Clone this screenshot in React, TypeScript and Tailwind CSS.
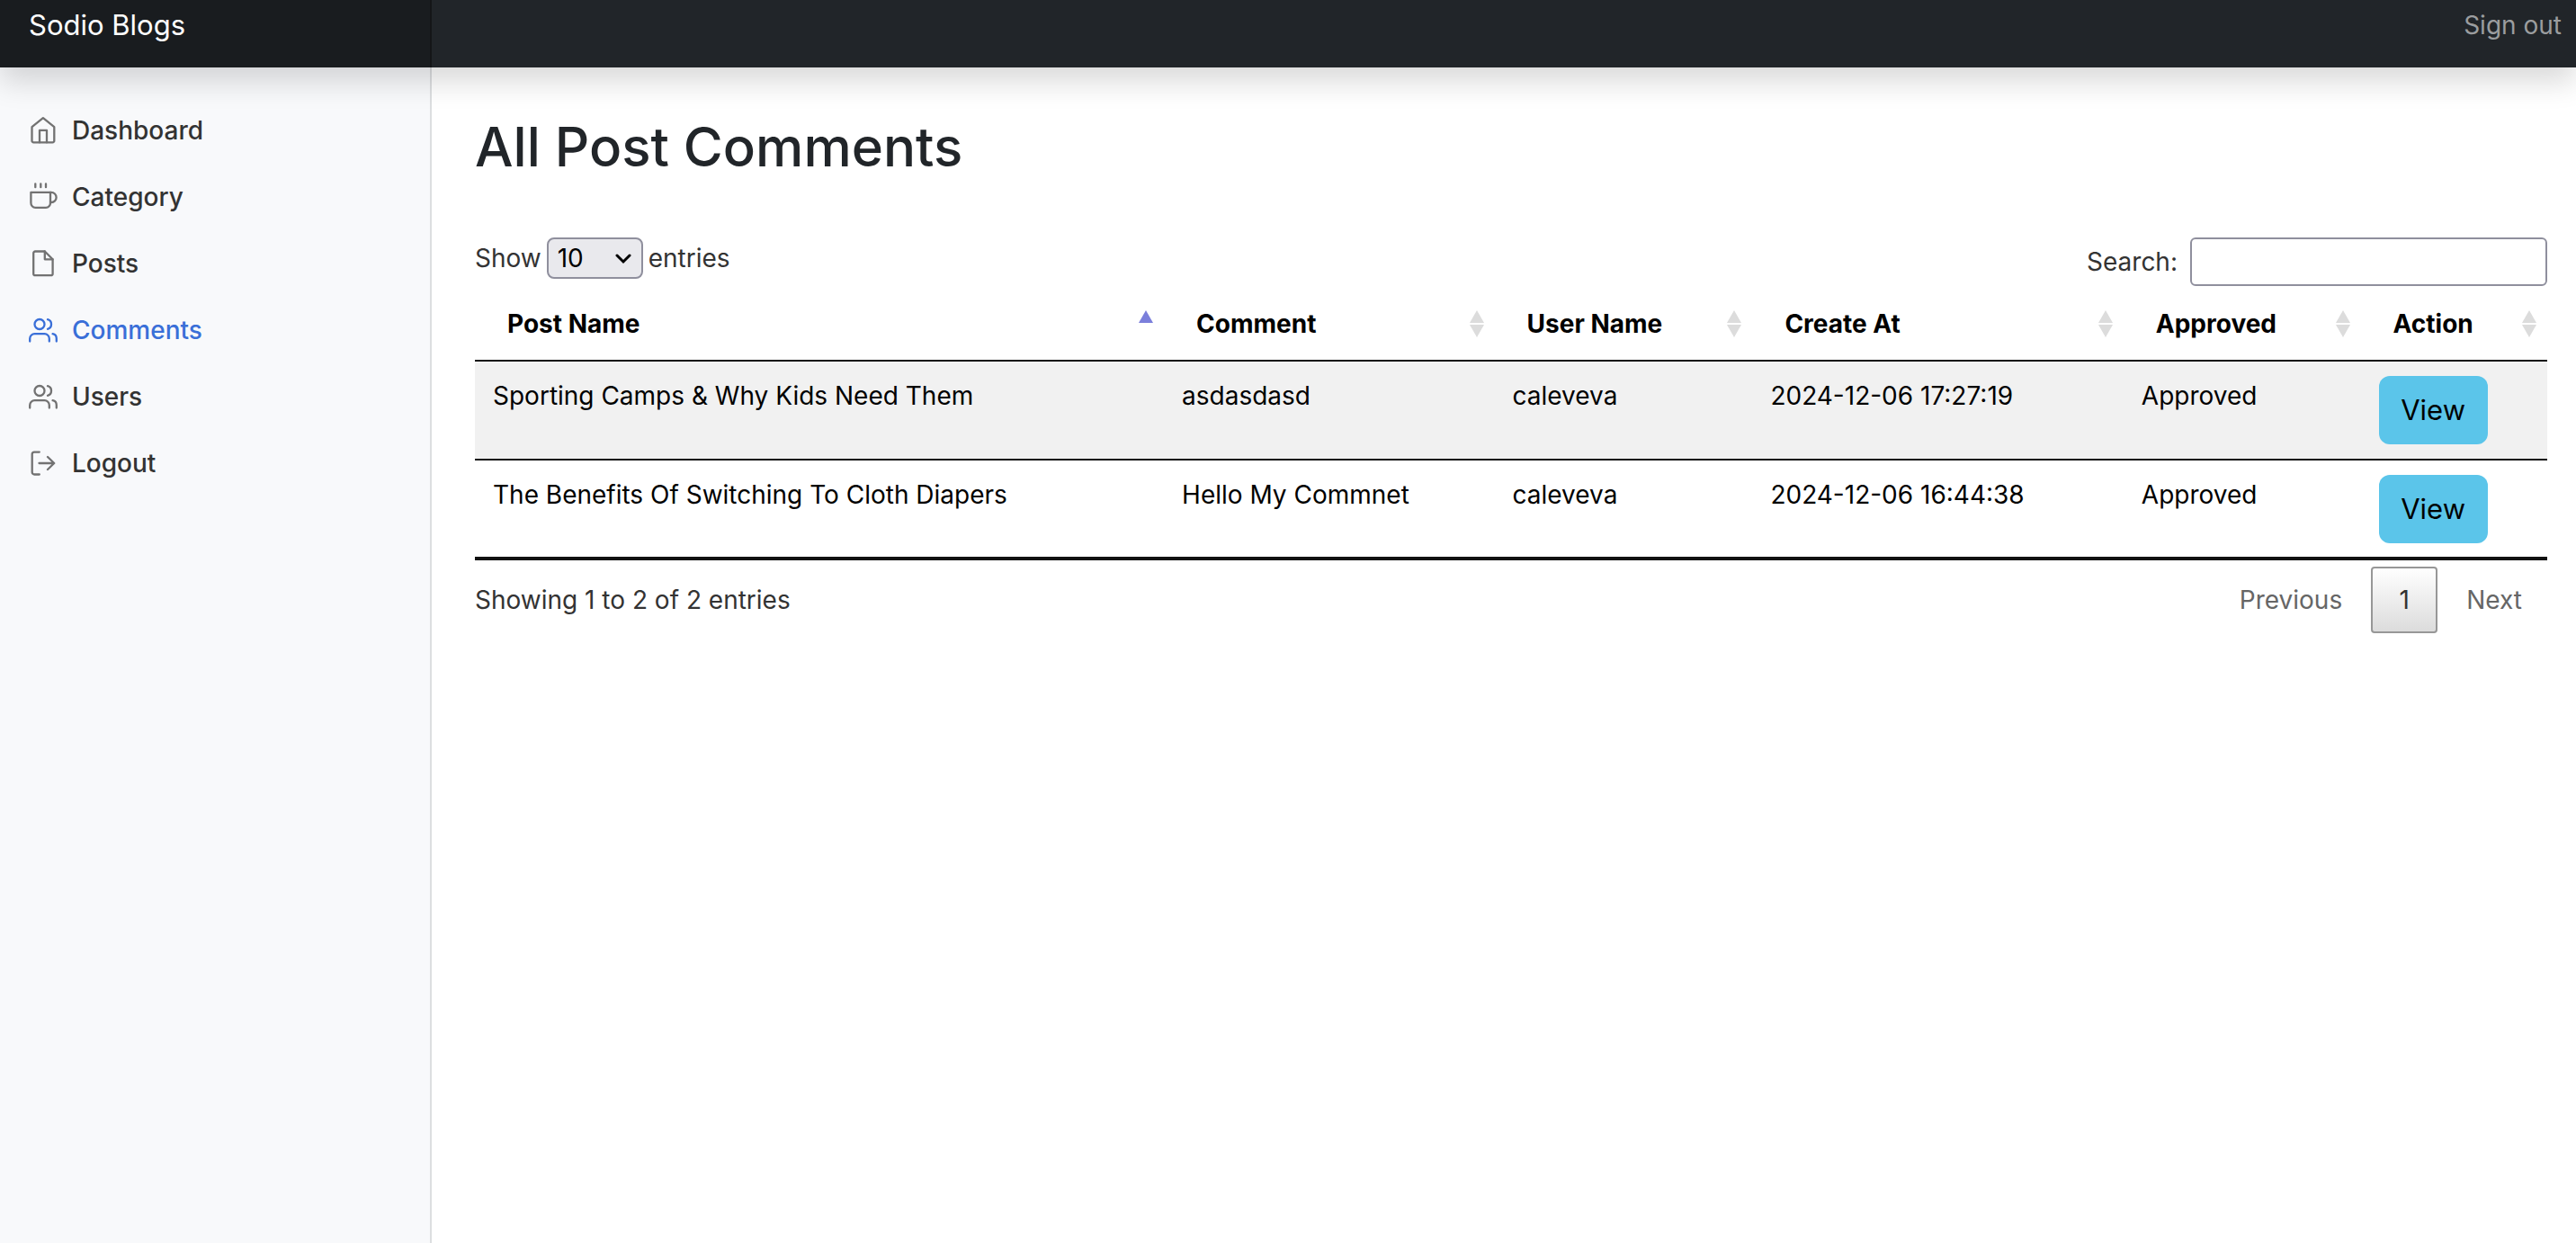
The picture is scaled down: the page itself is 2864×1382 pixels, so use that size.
import React from "react";

type IconName = "home" | "cup" | "file" | "people" | "exit";

const PATHS: Record<IconName, React.ReactNode> = {
  home: (
    <>
      <path d="M3.500 12.200 L15.900 2.200 L28.300 12.200 V27.500 A1.800 1.800 0 0 1 26.500 29.300 H5.300 A1.800 1.800 0 0 1 3.500 27.500 Z" />
      <path d="M12 29.300 V15.800 H20 V29.300" />
    </>
  ),
  cup: (
    <>
      <path d="M2.400 10.800 H24 V22.600 A5 5 0 0 1 19 27.800 H7.400 A5 5 0 0 1 2.400 22.600 Z" />
      <path d="M24 10.800 H25 A5.500 5.500 0 0 1 25 22 H24" />
      <path d="M7.300 1.300 V5.200 M13.300 1.300 V5.200 M19 1.300 V5.200" />
    </>
  ),
  file: (
    <>
      <path d="M7.200 2.500 H17.800 L26.600 11.300 V27.200 A2 2 0 0 1 24.600 29.200 H7.200 A2 2 0 0 1 5.200 27.200 V4.500 A2 2 0 0 1 7.200 2.500 Z" />
      <path d="M17.800 2.500 V11.300 H26.600" />
    </>
  ),
  people: (
    <>
      <circle cx="12" cy="9.500" r="5.500" />
      <path d="M1.200 28.500 V25.500 A5.300 5.300 0 0 1 6.500 20.200 H17.500 A5.300 5.300 0 0 1 22.800 25.500 V28.500" />
      <path d="M21 4.200 A5.500 5.500 0 0 1 21 14.800" />
      <path d="M26.600 20.200 A5.300 5.300 0 0 1 30.800 25.500 V28.500" />
    </>
  ),
  exit: (
    <>
      <path d="M11.800 3.600 H6.200 A2.500 2.500 0 0 0 3.700 6.100 V26 A2.500 2.500 0 0 0 6.200 28.500 H11.800" />
      <path d="M11.500 16 H28 M21 9 L28.200 16 L21 23" />
    </>
  ),
};

function Icon({ name }: { name: IconName }) {
  return (
    <svg aria-hidden="true" viewBox="0 0 32 32" className="size-8 shrink-0" fill="none" stroke="currentColor" strokeWidth="2.300" strokeLinecap="round" strokeLinejoin="round">
      {PATHS[name]}
    </svg>
  );
}

const NAV: { label: string; icon: IconName; active?: boolean }[] = [
  { label: "Dashboard", icon: "home" },
  { label: "Category", icon: "cup" },
  { label: "Posts", icon: "file" },
  { label: "Comments", icon: "people", active: true },
  { label: "Users", icon: "people" },
  { label: "Logout", icon: "exit" },
];

const COLUMNS = [
  { label: "Post Name", width: "w-[33.25%]", sorted: true },
  { label: "Comment", width: "w-[15.95%]" },
  { label: "User Name", width: "w-[12.45%]" },
  { label: "Create At", width: "w-[17.9%]" },
  { label: "Approved", width: "w-[11.45%]" },
  { label: "Action", width: "w-[9%]" },
];

const ROWS = [
  ["Sporting Camps & Why Kids Need Them", "asdasdasd", "caleveva", "2024-12-06 17:27:19", "Approved"],
  ["The Benefits Of Switching To Cloth Diapers", "Hello My Commnet", "caleveva", "2024-12-06 16:44:38", "Approved"],
];

function SortIcon({ sorted }: { sorted?: boolean }) {
  return (
    <svg aria-hidden="true" viewBox="0 0 18 32" className="h-8 w-[18px] shrink-0">
      <path d="M9 1 L17 15 H1 Z" className={sorted ? "fill-[#7b7fdb]" : "fill-[#dcdcdc]"} />
      {!sorted && <path d="M9 31 L17 17 H1 Z" className="fill-[#dcdcdc]" />}
    </svg>
  );
}

export default function App() {
  return (
    <div className="flex min-h-screen flex-col bg-white font-['Inter','Liberation_Sans',sans-serif] text-[28px] leading-[42px] text-[#333333]">
      <header className="relative z-10 flex h-[75px] items-start justify-between bg-[#212529] shadow-[0_16px_32px_rgba(0,0,0,0.15)]">
        <a href="#" className="h-full w-[480px] border-r-2 border-[#141618] bg-[#191c1f] px-8 pt-1 text-[31px] leading-[48px] text-white">
          Sodio Blogs
        </a>
        <a href="#" className="px-4 pt-[7px] text-[#9b9d9f]">
          Sign out
        </a>
      </header>
      <div className="flex flex-1">
        <nav className="w-[480px] shrink-0 border-r-2 border-[#dcdee0] bg-[#f8f9fb] pt-[33px]">
          <ul>
            {NAV.map((item) => (
              <li key={item.label}>
                <a href="#" aria-current={item.active ? "page" : undefined} className={`flex h-[74px] items-center gap-4 px-8 font-medium ${item.active ? "text-[#3a6fd8]" : "text-[#333333]"}`}>
                  <span className={item.active ? "text-[#3a6fd8]" : "text-[#727272]"}>
                    <Icon name={item.icon} />
                  </span>
                  {item.label}
                </a>
              </li>
            ))}
          </ul>
        </nav>
        <main className="min-w-0 flex-1 pt-[50px] pr-8 pl-12">
          <h1 className="text-[60px] leading-[76px] font-medium text-[#212529]">All Post Comments</h1>
          <div className="mt-[63px] flex items-start justify-between">
            <label className="flex items-center gap-1.5">
              Show
              <span className="relative">
                <select className="block h-[46px] w-[107px] appearance-none rounded-lg border-2 border-[#8f8f9d] bg-[#e9e9ed] pl-2.5 leading-[38px] text-black" defaultValue="10">
                  <option>10</option>
                  <option>25</option>
                  <option>50</option>
                  <option>100</option>
                </select>
                <svg aria-hidden="true" viewBox="0 0 18 12" className="pointer-events-none absolute top-[18px] right-[13px] h-3 w-[18px]" fill="none" stroke="#000" strokeWidth="3">
                  <path d="M2 2 L9 9 L16 2" strokeLinecap="round" />
                </svg>
              </span>
              entries
            </label>
            <label className="flex items-center gap-3.5">
              Search:
              <input type="search" className="h-[54px] w-[397px] rounded-md border-2 border-[#8f8f9d] bg-white px-2" />
            </label>
          </div>
          <table className="mt-1 w-full table-fixed border-collapse text-left text-black">
            <thead>
              <tr className="h-[79px] border-b-2 border-[#111111]">
                {COLUMNS.map((c) => (
                  <th key={c.label} className={`${c.width} pr-[11px] pb-0.5 pl-9 font-bold`} aria-sort={c.sorted ? "ascending" : undefined}>
                    <div className="flex items-center justify-between whitespace-nowrap">
                      {c.label}
                      <SortIcon sorted={c.sorted} />
                    </div>
                  </th>
                ))}
              </tr>
            </thead>
            <tbody>
              {ROWS.map((row) => (
                <tr key={row[0]} className="h-[110px] border-b-2 border-[#111111] align-top last:border-b-4 odd:bg-[#f1f1f1]">
                  {row.map((cell, i) => (
                    <td key={i} className="pt-[17px] pl-5 whitespace-nowrap">
                      {cell}
                    </td>
                  ))}
                  <td className="pt-4 pl-5">
                    <button type="button" className="block h-[76px] w-[121px] rounded-xl bg-[#5bc5ea] text-[31px]">
                      View
                    </button>
                  </td>
                </tr>
              ))}
            </tbody>
          </table>
          <div className="flex items-start justify-between">
            <p className="pt-[23px]">Showing 1 to 2 of 2 entries</p>
            <div className="flex items-center gap-1 pt-[7px] text-[#666666]">
              <button type="button" disabled className="h-[74px] px-7">Previous</button>
              <button type="button" aria-current="page" className="h-[74px] w-[74px] rounded-sm border-2 border-[#979797] bg-linear-to-b from-white to-[#dcdcdc] text-[#333333]">1</button>
              <button type="button" disabled className="h-[74px] px-7">Next</button>
            </div>
          </div>
        </main>
      </div>
    </div>
  );
}
